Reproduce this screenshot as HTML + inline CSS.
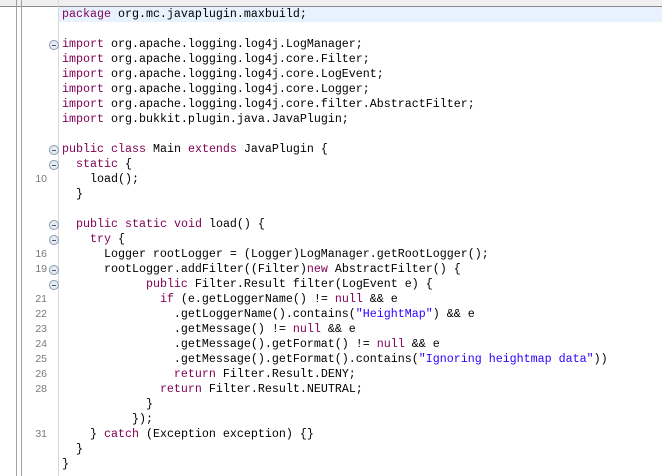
<!DOCTYPE html>
<html><head><style>
body{margin:0;width:662px;height:476px;background:#fff;position:relative;overflow:hidden;font-family:"Liberation Mono",monospace;}
.top{position:absolute;left:0;top:0;width:662px;height:6px;background:#f0f0f0;border-bottom:1px solid #8a8a8a}
.vl{position:absolute;top:0;height:476px;width:1px;background:#a0a0a0}
.hl{position:absolute;left:59px;top:7px;width:603px;height:15px;background:#e8f2fe}
.ln{position:absolute;left:62px;font-size:11.67px;line-height:15px;height:15px;white-space:pre;color:#000}
.n{position:absolute;width:47px;text-align:right;font-size:10.5px;line-height:15px;color:#787878;font-family:"Liberation Sans",sans-serif}
.f{position:absolute;left:49px;width:8px;height:8px;border:1px solid #8a9cb0;border-radius:50%;background:#e4ebf3}
.f:after{content:"";position:absolute;left:2px;top:3.5px;width:4px;height:1px;background:#556}
k{color:#7f0055}
s{color:#2a00ff;text-decoration:none}
</style></head><body>
<div class="top"></div>
<div class="vl" style="left:16px"></div>
<div class="vl" style="left:21px"></div>
<div class="vl" style="left:58px;background:#d8d8d8"></div>
<div class="hl"></div>

<div class="ln" style="top:7px"><k>package</k> org.mc.javaplugin.maxbuild;</div>
<div class="ln" style="top:37px"><k>import</k> org.apache.logging.log4j.LogManager;</div>
<div class="ln" style="top:52px"><k>import</k> org.apache.logging.log4j.core.Filter;</div>
<div class="ln" style="top:67px"><k>import</k> org.apache.logging.log4j.core.LogEvent;</div>
<div class="ln" style="top:82px"><k>import</k> org.apache.logging.log4j.core.Logger;</div>
<div class="ln" style="top:97px"><k>import</k> org.apache.logging.log4j.core.filter.AbstractFilter;</div>
<div class="ln" style="top:112px"><k>import</k> org.bukkit.plugin.java.JavaPlugin;</div>
<div class="ln" style="top:142px"><k>public</k> <k>class</k> Main <k>extends</k> JavaPlugin {</div>
<div class="ln" style="top:157px">  <k>static</k> {</div>
<div class="ln" style="top:172px">    load();</div>
<div class="ln" style="top:187px">  }</div>
<div class="ln" style="top:217px">  <k>public</k> <k>static</k> <k>void</k> load() {</div>
<div class="ln" style="top:232px">    <k>try</k> {</div>
<div class="ln" style="top:247px">      Logger rootLogger = (Logger)LogManager.getRootLogger();</div>
<div class="ln" style="top:262px">      rootLogger.addFilter((Filter)<k>new</k> AbstractFilter() {</div>
<div class="ln" style="top:277px">            <k>public</k> Filter.Result filter(LogEvent e) {</div>
<div class="ln" style="top:292px">              <k>if</k> (e.getLoggerName() != <k>null</k> &amp;&amp; e</div>
<div class="ln" style="top:307px">                .getLoggerName().contains(<s>"HeightMap"</s>) &amp;&amp; e</div>
<div class="ln" style="top:322px">                .getMessage() != <k>null</k> &amp;&amp; e</div>
<div class="ln" style="top:337px">                .getMessage().getFormat() != <k>null</k> &amp;&amp; e</div>
<div class="ln" style="top:352px">                .getMessage().getFormat().contains(<s>"Ignoring heightmap data"</s>))</div>
<div class="ln" style="top:367px">                <k>return</k> Filter.Result.DENY;</div>
<div class="ln" style="top:382px">              <k>return</k> Filter.Result.NEUTRAL;</div>
<div class="ln" style="top:397px">            }</div>
<div class="ln" style="top:412px">          });</div>
<div class="ln" style="top:427px">    } <k>catch</k> (Exception exception) {}</div>
<div class="ln" style="top:442px">  }</div>
<div class="ln" style="top:457px">}</div>

<div class="n" style="top:172px">10</div>
<div class="n" style="top:247px">16</div>
<div class="n" style="top:262px">19</div>
<div class="n" style="top:292px">21</div>
<div class="n" style="top:307px">22</div>
<div class="n" style="top:322px">23</div>
<div class="n" style="top:337px">24</div>
<div class="n" style="top:352px">25</div>
<div class="n" style="top:367px">26</div>
<div class="n" style="top:382px">28</div>
<div class="n" style="top:427px">31</div>

<div class="f" style="top:40px"></div>
<div class="f" style="top:145px"></div>
<div class="f" style="top:160px"></div>
<div class="f" style="top:220px"></div>
<div class="f" style="top:235px"></div>
<div class="f" style="top:265px"></div>
<div class="f" style="top:280px"></div>
</body></html>
